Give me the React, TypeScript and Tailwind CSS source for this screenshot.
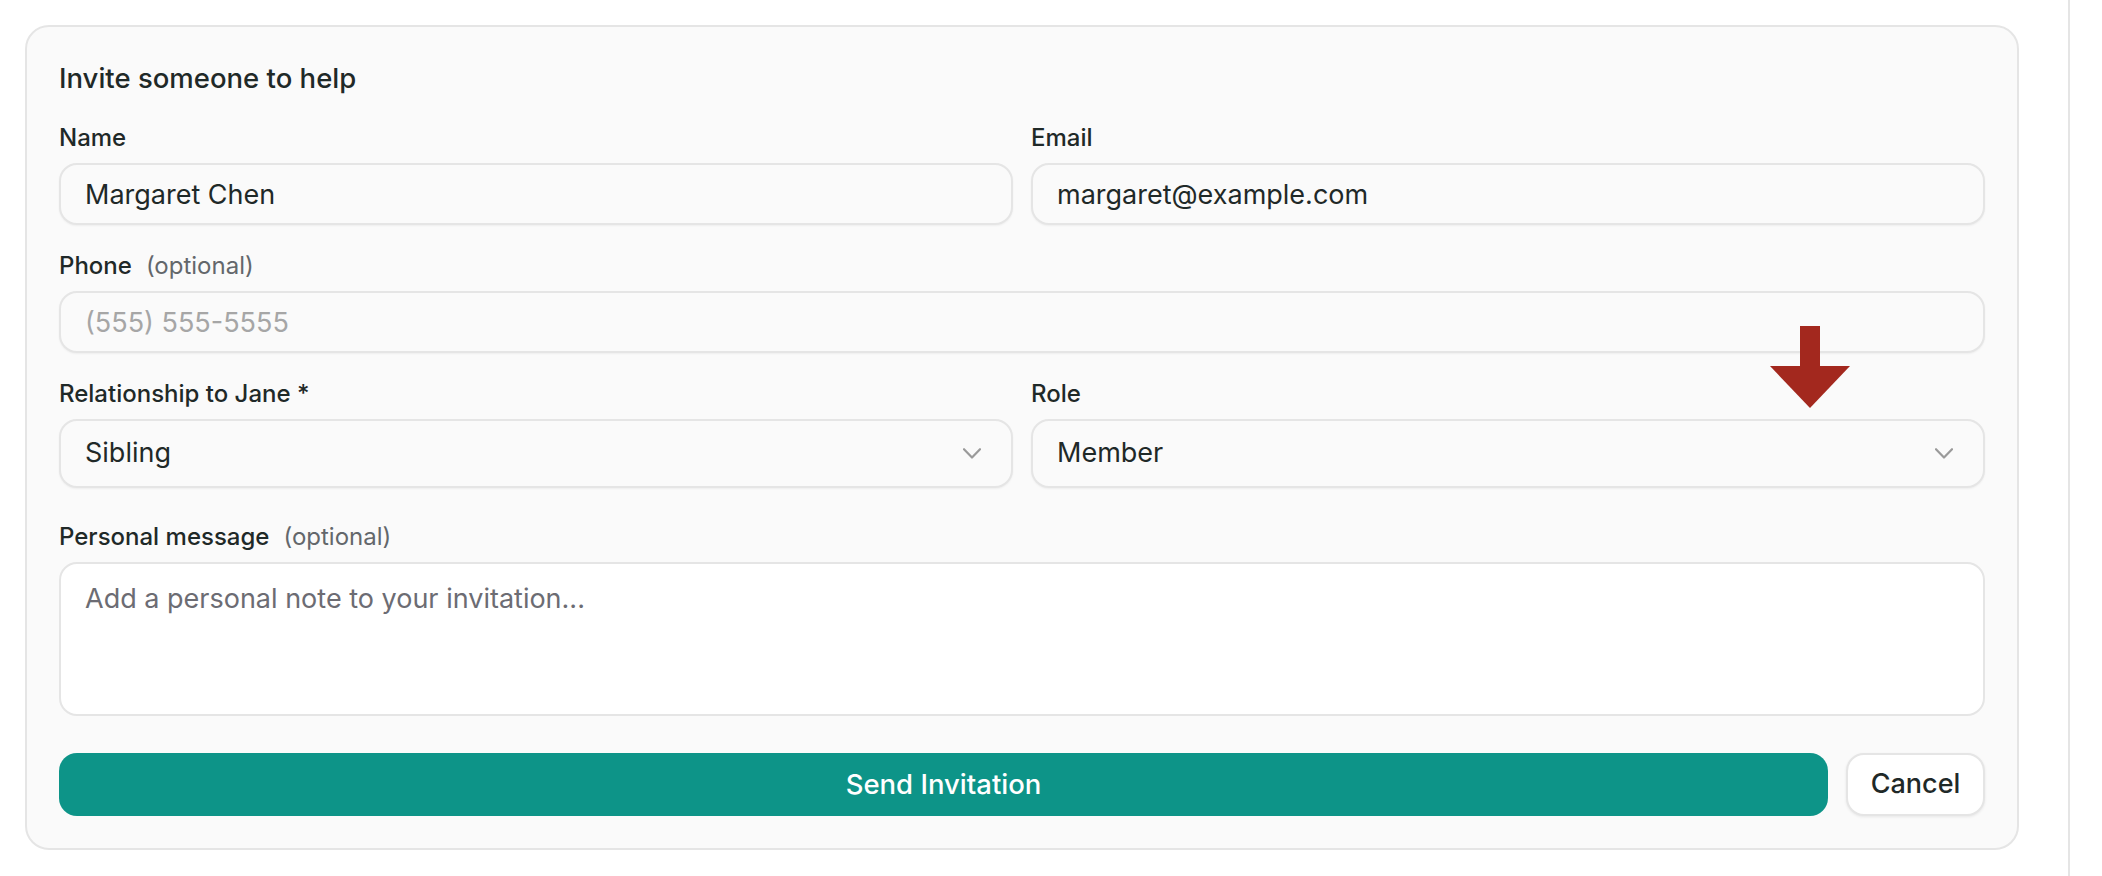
import React from 'react';

function Label({ text, hint }: { text: string; hint?: string }) {
  return (
    <div className="h-[30px] leading-[30px] text-[24px] font-medium text-[#1f2928] whitespace-nowrap">
      {text}
      {hint && <span className="ml-[14px] font-normal text-[#63676b]">{hint}</span>}
    </div>
  );
}

function TextInput({ value, placeholder }: { value?: string; placeholder?: string }) {
  return (
    <input
      readOnly
      defaultValue={value}
      placeholder={placeholder}
      className="mt-[10px] block w-full h-[62px] rounded-[18px] border-2 border-[#e5e5e5] bg-[#fafafa] px-[24px] text-[27px] text-[#1f2928] placeholder:text-[#a6a6a6] shadow-[0_1px_2px_rgba(0,0,0,0.05)] outline-none"
    />
  );
}

function SelectBox({ value }: { value: string }) {
  return (
    <div className="mt-[10px] flex h-[69px] w-full items-center justify-between rounded-[18px] border-2 border-[#e5e5e5] bg-[#fafafa] pl-[24px] pr-[30px] shadow-[0_1px_2px_rgba(0,0,0,0.05)]">
      <span className="text-[27px] text-[#1f2928]">{value}</span>
      <svg width="18" height="11" viewBox="0 0 18 11" fill="none">
        <path d="M1 1.2 L9 9.5 L17 1.2" stroke="#9a9a9a" strokeWidth="2.2" strokeLinecap="round" strokeLinejoin="round" />
      </svg>
    </div>
  );
}

export default function App() {
  return (
    <div className="relative flex h-[876px] w-[2102px] bg-white font-['Inter','Noto_Sans',sans-serif]">
      <div className="w-[2068px] shrink-0">
        <div className="ml-[25px] mt-[25px] w-[1994px] rounded-[24px] border-2 border-[#e5e5e5] bg-[#fafafa] px-[32px] pt-[33px] pb-[32px]">
          <div className="h-[36px] leading-[36px] text-[27.5px] font-medium text-[#1f2928]">Invite someone to help</div>

          <div className="mt-[27px] grid grid-cols-2 gap-x-[18px]">
            <div>
              <Label text="Name" />
              <TextInput value="Margaret Chen" />
            </div>
            <div>
              <Label text="Email" />
              <TextInput value="margaret@example.com" />
            </div>
          </div>

          <div className="mt-[26px]">
            <Label text="Phone" hint="(optional)" />
            <TextInput placeholder="(555) 555-5555" />
          </div>

          <div className="mt-[26px] grid grid-cols-2 gap-x-[18px]">
            <div>
              <Label text="Relationship to Jane *" />
              <SelectBox value="Sibling" />
            </div>
            <div>
              <Label text="Role" />
              <SelectBox value="Member" />
            </div>
          </div>

          <div className="mt-[34px]">
            <Label text="Personal message" hint="(optional)" />
            <textarea
              readOnly
              placeholder="Add a personal note to your invitation..."
              className="mt-[10px] block h-[154px] w-full resize-none rounded-[18px] border-2 border-[#e5e5e5] bg-white px-[24px] pt-[17px] text-[27px] leading-[36px] text-[#1f2928] placeholder:text-[#6c6c73] outline-none"
            />
          </div>

          <div className="mt-[37px] flex gap-[18px]">
            <button className="h-[63px] flex-1 rounded-[18px] bg-[#0d9488] text-[27.5px] font-medium text-white">
              Send Invitation
            </button>
            <button className="h-[63px] w-[139px] rounded-[18px] border-2 border-[#e5e5e5] bg-white text-[27px] font-medium text-[#1f2928] shadow-[0_1px_3px_rgba(0,0,0,0.08)]">
              Cancel
            </button>
          </div>
        </div>
      </div>
      <div className="flex-1 border-l-2 border-[#e5e5e5]" />

      <svg className="absolute left-[1770px] top-[326px]" width="80" height="82" viewBox="0 0 80 82">
        <rect x="30" y="0" width="20" height="41" fill="#a3281e" />
        <polygon points="0,40 80,40 40,82" fill="#a3281e" />
      </svg>
    </div>
  );
}
